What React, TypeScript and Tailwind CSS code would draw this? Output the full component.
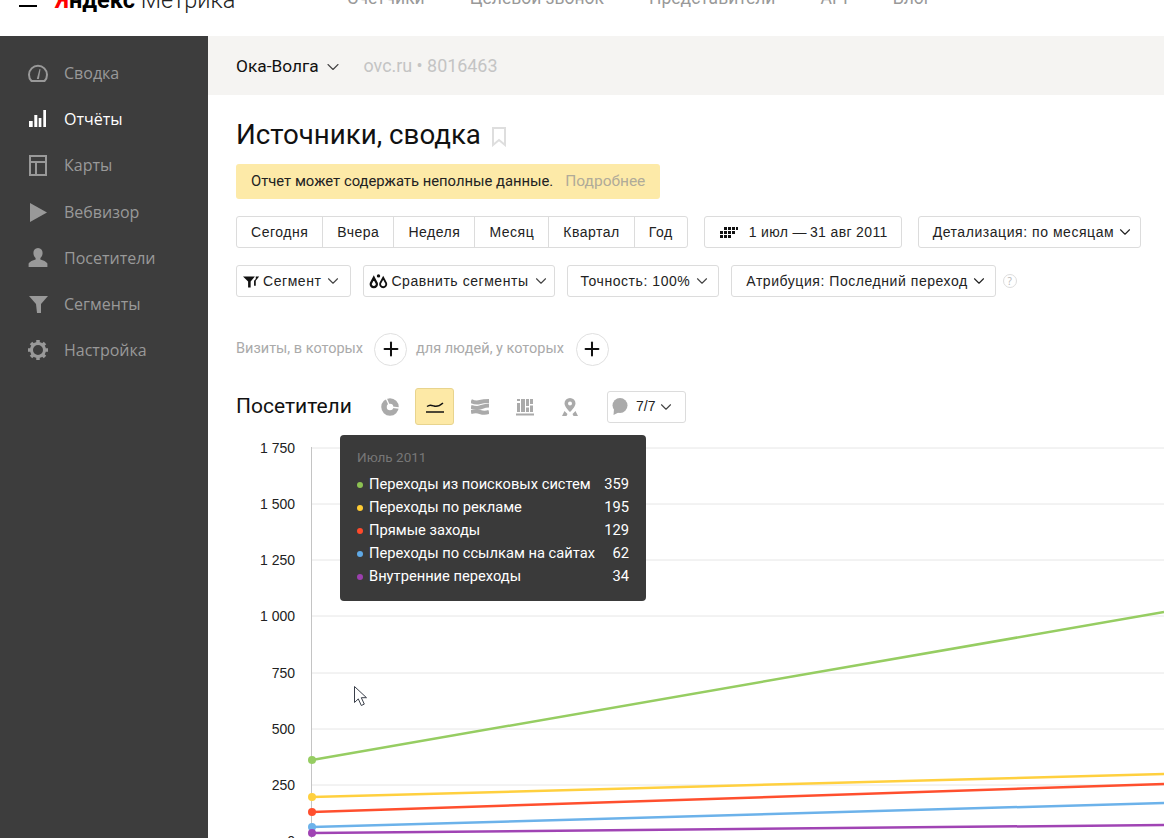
import React from "react";
import { ChevronDown, Plus } from "lucide-react";

const SANS = "font-['Liberation_Sans',Arial,sans-serif]";

const NAV = [
  { label: "Сводка", icon: "gauge" },
  { label: "Отчёты", icon: "bars", active: true },
  { label: "Карты", icon: "map" },
  { label: "Вебвизор", icon: "play" },
  { label: "Посетители", icon: "user" },
  { label: "Сегменты", icon: "filter" },
  { label: "Настройка", icon: "gear" },
];

const PERIODS = ["Сегодня", "Вчера", "Неделя", "Месяц", "Квартал", "Год"];

const TIP_ROWS = [
  { label: "Переходы из поисковых систем", value: 359, dot: "bg-[#8cc152]" },
  { label: "Переходы по рекламе", value: 195, dot: "bg-[#ffcc33]" },
  { label: "Прямые заходы", value: 129, dot: "bg-[#ff4a2b]" },
  { label: "Переходы по ссылкам на сайтах", value: 62, dot: "bg-[#5fa9e6]" },
  { label: "Внутренние переходы", value: 34, dot: "bg-[#9b3fae]" },
];

const AXIS = [
  { label: "1 750", y: 448 },
  { label: "1 500", y: 504 },
  { label: "1 250", y: 560 },
  { label: "1 000", y: 616 },
  { label: "750", y: 673 },
  { label: "500", y: 729 },
  { label: "250", y: 785 },
  { label: "0", y: 841 },
];

const SERIES = [
  { color: "#96cd62", y1: 760, y2: 612 },
  { color: "#ffd03f", y1: 797, y2: 774 },
  { color: "#ff4f2e", y1: 812, y2: 784 },
  { color: "#6cb2ea", y1: 827, y2: 803 },
  { color: "#a044b4", y1: 833, y2: 825 },
];

function NavIcon({ name }: { name: string }) {
  const cls = "w-[22px] h-[22px] fill-current";
  switch (name) {
    case "gauge":
      return (
        <svg viewBox="0 0 22 22" className={cls}>
          <path d="M4.500 19a9 9 0 1 1 13 0z" fill="none" stroke="currentColor" strokeWidth="2" />
          <path d="M9.800 17l2.700-10 1 .3-1.600 9.700z" />
        </svg>
      );
    case "bars":
      return (
        <svg viewBox="0 0 22 22" className={cls}>
          <rect x="2" y="13" width="3.700" height="6" />
          <rect x="7.300" y="7" width="3" height="12" />
          <rect x="11.700" y="10" width="2.700" height="9" />
          <rect x="16.300" y="2" width="2.700" height="17" />
        </svg>
      );
    case "map":
      return (
        <svg viewBox="0 0 22 22" className={cls}>
          <path d="M2 1h18v21H2zm2 2v4h14V3zm0 6v11h4V9zm6 0v11h8V9z" fillRule="evenodd" />
        </svg>
      );
    case "play":
      return (
        <svg viewBox="0 0 22 22" className={cls}>
          <path d="M3 2l17 9.500L3 21z" />
        </svg>
      );
    case "user":
      return (
        <svg viewBox="0 0 22 22" className={cls}>
          <path d="M11 1c3 0 4.600 2.200 4.600 5 0 2.300-1 4-2.200 5v1.500c2.800.8 6 2 7 4V20H1.600v-3.500c1-2 4.200-3.200 7-4V11C7.400 10 6.400 8.300 6.400 6c0-2.800 1.600-5 4.600-5z" />
        </svg>
      );
    case "filter":
      return (
        <svg viewBox="0 0 22 22" className={cls}>
          <path d="M2 3h19l-7 8v9h-4l-1-9z" />
        </svg>
      );
    default:
      return (
        <svg viewBox="0 0 22 22" className="w-[22px] h-[22px]">
          <circle cx="11" cy="11" r="6.500" fill="none" stroke="currentColor" strokeWidth="3" />
          <path
            d="M11 1v4M11 17v4M1 11h4M17 11h4M4 4l2.800 2.800M15.200 15.200L18 18M18 4l-2.800 2.800M6.800 15.200L4 18"
            stroke="currentColor"
            strokeWidth="3.500"
          />
        </svg>
      );
  }
}

function SelectButton({ children }: { children: React.ReactNode }) {
  return (
    <button
      className={`${SANS} h-8 flex items-center border border-[#dcdcdc] rounded-[3px] bg-white text-[14px] text-[#222] whitespace-nowrap tracking-[0.55px]`}
    >
      {children}
    </button>
  );
}

function Sidebar() {
  return (
    <aside className="w-[208px] shrink-0 bg-[#3d3d3d] pt-[14px] font-['Open_Sans',sans-serif] h-[802px]">
      {NAV.map((item) => (
        <div
          key={item.label}
          className={`h-[46.200px] flex items-center pl-[27px] gap-[15px] text-[16px] ${
            item.active ? "text-white" : "text-[#999]"
          }`}
        >
          <NavIcon name={item.icon} />
          <span>{item.label}</span>
        </div>
      ))}
    </aside>
  );
}

function Tooltip() {
  return (
    <div className="absolute left-[132px] top-[5px] w-[306px] h-[166px] bg-[#3a3a3a] rounded-[4px] pl-[17px] pr-[17px] pt-[13px] font-['Roboto',sans-serif] text-[14.700px] text-white">
      <div className="text-[13.500px] text-[#777] h-[19px] leading-[19px] mb-[6px]">Июль 2011</div>
      {TIP_ROWS.map((row) => (
        <div key={row.label} className="h-[23px] flex items-center">
          <span className={`w-[6px] h-[6px] rounded-full mr-[6px] ${row.dot}`} />
          <span className="flex-1 whitespace-nowrap">{row.label}</span>
          <span>{row.value}</span>
        </div>
      ))}
    </div>
  );
}

function Chart() {
  const top = 430;
  return (
    <div className="relative h-[408px] -ml-[28px]">
      <svg viewBox={`208 ${top} 956 408`} className="w-[956px] h-[408px] block">
        {AXIS.map((a) => (
          <g key={a.label}>
            <line x1="312" x2="1164" y1={a.y} y2={a.y} stroke="#e6e6e6" strokeWidth="1" />
            <text
              x="295"
              y={a.y + 5}
              textAnchor="end"
              fontSize="14"
              fill="#222"
              fontFamily="'Liberation Sans',Arial,sans-serif"
            >
              {a.label}
            </text>
          </g>
        ))}
        <line x1="311.500" x2="311.500" y1="447" y2="838" stroke="#c4c4c4" strokeWidth="1" />
        {SERIES.map((s) => (
          <g key={s.color}>
            <line x1="312" y1={s.y1} x2="1164" y2={s.y2} stroke={s.color} strokeWidth="2.500" />
            <circle cx="312" cy={s.y1} r="4" fill={s.color} />
          </g>
        ))}
        <path
          d="M354.500 686.500v16l3.800-3.600 3 6.600 3-1.400-3-6.400h5.200z"
          fill="#fff"
          stroke="#3a3f4a"
          strokeWidth="1"
        />
      </svg>
      <Tooltip />
    </div>
  );
}

export default function App() {
  return (
    <div className="w-[1164px] h-[838px] overflow-hidden bg-white">
      <header className="h-[36px] relative overflow-hidden flex items-center">
        <div className="-mt-[36px] flex items-center h-[36px] w-full">
          <div className="w-[18px] h-[2px] bg-black ml-[19px] mt-[12px]" />
          <div className="ml-[18px] text-[23.500px] font-['Roboto',sans-serif] whitespace-nowrap leading-[36px] w-[235px]">
            <span className="text-[#f00] font-bold">Я</span>
            <span className="font-bold">ндекс</span>
            <span className="font-light text-[#222]"> Метрика</span>
          </div>
          <nav className="flex gap-[45px] text-[17.500px] text-[#999] font-['Roboto',sans-serif] ml-[57px] whitespace-nowrap -mt-[3px]">
            <span>Счётчики</span>
            <span>Целевой звонок</span>
            <span>Представители</span>
            <span>API</span>
            <span>Блог</span>
          </nav>
        </div>
      </header>
      <div className="flex">
        <Sidebar />
        <main className="flex-1 min-w-0">
          <div className="h-[59px] bg-[#f5f4f2] flex items-center pl-[28px] font-['Roboto',sans-serif] text-[17.300px] pt-[2px]">
            <span className="text-[#111]">Ока-Волга</span>
            <ChevronDown size={20} strokeWidth={1.300} className="ml-[4px] text-[#444]" />
            <span className="ml-[21px] text-[#c4c4c4] text-[17.900px]">ovc.ru • 8016463</span>
          </div>
          <div className="pl-[28px]">
            <div className="flex items-center mt-[22px] h-[36px]">
              <h1 className="font-['Roboto',sans-serif] text-[27.700px] text-[#111] leading-[36px] whitespace-nowrap">
                Источники, сводка
              </h1>
              <svg viewBox="0 0 14 20" className="w-[14px] h-[20px] ml-[11px] mt-[3px]">
                <path d="M1 1h12v17l-6-5-6 5z" fill="none" stroke="#dedede" strokeWidth="2" />
              </svg>
            </div>
            <div className="mt-[11px] w-[424px] h-[35px] flex items-center bg-[#fdeaa8] rounded-[3px] px-[15px] font-['Roboto',sans-serif] text-[14.800px] whitespace-nowrap">
              <span className="text-[#222]">Отчет может содержать неполные данные.</span>
              <span className="ml-[12px] text-[#b0ab99] text-[15.500px]">Подробнее</span>
            </div>
            <div className="mt-[17px] flex gap-[16px]">
              <div className="flex h-8 border border-[#dcdcdc] rounded-[3px]">
                {PERIODS.map((p, i) => (
                  <div
                    key={p}
                    className={`${SANS} flex items-center px-[14px] text-[14px] text-[#222] tracking-[0.52px] ${
                      i > 0 ? "border-l border-[#dcdcdc]" : ""
                    }`}
                  >
                    {p}
                  </div>
                ))}
              </div>
              <SelectButton>
                <span className="pl-[15px] pr-[13px] flex items-center gap-[11px]">
                  <svg viewBox="0 0 18 12" className="w-[18px] h-[12px] fill-[#111]">
                    <path d="M0 5h3v3H0zM0 9h3v3H0zM4 5h3v3H4zM4 9h3v3H4zM4 1h3v3H4zM8 1h3v3H8zM8 5h3v3H8zM8 9h3v3H8zM12 1h3v3h-3zM12 5h3v3h-3zM16 1h2v3h-2z" />
                  </svg>
                  <span className="tracking-[0.35px]">1 июл —{"\u2009"}31 авг 2011</span>
                </span>
              </SelectButton>
              <SelectButton>
                <span className="pl-[14px] pr-[6px] flex items-center gap-[2px]">
                  Детализация: по месяцам
                  <ChevronDown size={18} strokeWidth={1.500} />
                </span>
              </SelectButton>
            </div>
            <div className="mt-[17px] flex items-center gap-[12px]">
              <SelectButton>
                <span className="pl-[6px] pr-[8px] flex items-center gap-[3px]">
                  <svg viewBox="0 0 20 14" className="w-[17px] h-[13px] fill-[#111]">
                    <path d="M0 1h14L9 7v7H6V7zM15 1h4l-4 5v6h-2V6l2-2z" />
                  </svg>
                  Сегмент
                  <ChevronDown size={18} strokeWidth={1.500} className="text-[#444]" />
                </span>
              </SelectButton>
              <SelectButton>
                <span className="pl-[5px] pr-[4px] flex items-center gap-[3px]">
                  <svg viewBox="0 0 20 16" className="w-[19px] h-[15px]">
                    <path d="M5 4l3.200 6a3.300 3.300 0 1 1-6.400 0z" fill="#fff" stroke="#111" strokeWidth="2.400" />
                    <path d="M15 4l3.200 6a3.300 3.300 0 1 1-6.400 0z" fill="#fff" stroke="#111" strokeWidth="2" />
                    <circle cx="10" cy="2" r="1.800" fill="#111" />
                  </svg>
                  Сравнить сегменты
                  <ChevronDown size={18} strokeWidth={1.500} className="text-[#444]" />
                </span>
              </SelectButton>
              <SelectButton>
                <span className="pl-[13px] pr-[7px] flex items-center gap-[3px]">
                  Точность: 100%
                  <ChevronDown size={18} strokeWidth={1.500} className="text-[#444]" />
                </span>
              </SelectButton>
              <SelectButton>
                <span className="pl-[14px] pr-[7px] flex items-center gap-[2px]">
                  Атрибуция: Последний переход
                  <ChevronDown size={18} strokeWidth={1.500} />
                </span>
              </SelectButton>
              <span className="w-[14px] h-[14px] rounded-full border border-[#ddd] text-[10px] text-[#bbb] flex items-center justify-center -ml-[5px]">
                ?
              </span>
            </div>
            <div className="mt-[35px] flex items-center h-[34px] font-['Roboto',sans-serif] text-[14.500px] text-[#aaa] whitespace-nowrap">
              <span>Визиты, в которых</span>
              <span className="ml-[11px] w-[33px] h-[33px] rounded-full border border-[#e0e0e0] flex items-center justify-center text-[#111]">
                <Plus size={22} strokeWidth={2.200} />
              </span>
              <span className="ml-[9px]">для людей, у которых</span>
              <span className="ml-[12px] w-[33px] h-[33px] rounded-full border border-[#e0e0e0] flex items-center justify-center text-[#111]">
                <Plus size={22} strokeWidth={2.200} />
              </span>
            </div>
            <div className="mt-[22px] flex items-center h-[37px]">
              <span className="font-['Roboto',sans-serif] text-[21px] text-[#111] w-[135px] whitespace-nowrap">Посетители</span>
              <svg viewBox="0 0 18 18" className="w-[18px] h-[18px] ml-[10px]">
                <circle cx="9" cy="9" r="6" fill="none" stroke="#aaa" strokeWidth="5.500" />
                <path d="M9 9L5 0M9 9l9 1" stroke="#fff" strokeWidth="1.300" />
              </svg>
              <span className="ml-[16px] w-[39px] h-[37px] rounded-[3px] bg-[#fde9a6] border border-[#e8d48e] flex items-center justify-center">
                <svg viewBox="0 0 18 12" className="w-[18px] h-[12px]" fill="none" stroke="#111" strokeWidth="1.500">
                  <path d="M1 5.500c3-2 4-1.500 7-.5s5 .5 9-3" />
                  <path d="M0 11h18" />
                </svg>
              </span>
              <svg viewBox="0 0 18 16" className="w-[18px] h-[16px] ml-[17px]" fill="none" stroke="#aaa" strokeWidth="4">
                <path d="M0 2c4 2 6 2 9 1s5-1 9-1" />
                <path d="M0 8c4 1 6 1.500 9 .5s5-2 9-2" />
                <path d="M0 13c4-1 6-1 9 0s6 1 9 0" />
              </svg>
              <svg viewBox="0 0 18 18" className="w-[18px] h-[18px] fill-[#aaa] ml-[27px]">
                <path d="M1 1h3v2H1zM1 5h3v9H1zM5 1h4v13H5zM10 1h3v7h-3zM10 9.500h3V14h-3zM14 1h3v5h-3zM14 7.500h3V14h-3zM0 15.500h18V17.500H0z" />
              </svg>
              <svg viewBox="0 0 18 18" className="w-[18px] h-[18px] fill-[#aaa] ml-[27px]">
                <path d="M9 0a5.500 5.500 0 0 1 5.500 5.500C14.500 9 9 14 9 14S3.500 9 3.500 5.500A5.500 5.500 0 0 1 9 0zm0 3.500a2 2 0 1 0 0 4 2 2 0 0 0 0-4z" fillRule="evenodd" />
                <path d="M1 18l2.500-5 3 3-1 2zM17 18l-2.500-5-3 3 1 2z" />
              </svg>
              <span className="ml-[28px] w-[79px] h-8 border border-[#dcdcdc] rounded-[3px] flex items-center pl-[4px] gap-[8px]">
                <svg viewBox="0 0 16 17" className="w-[16px] h-[17px] fill-[#aaa]">
                  <circle cx="8" cy="7.500" r="7.500" />
                  <path d="M2 11l-.5 6 6-3z" />
                </svg>
                <span className={`${SANS} text-[14px] text-[#222] flex items-center gap-[2px]`}>
                  7/7
                  <ChevronDown size={18} strokeWidth={1.500} className="text-[#444]" />
                </span>
              </span>
            </div>
            <div className="mt-[5px]">
              <Chart />
            </div>
          </div>
        </main>
      </div>
    </div>
  );
}
